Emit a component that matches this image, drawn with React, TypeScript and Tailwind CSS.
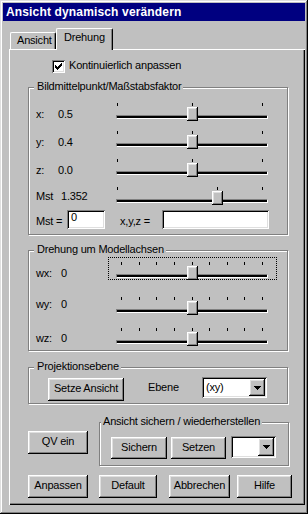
import type { ReactNode } from "react";

const raised =
  "shadow-[inset_-1px_-1px_0_#000,inset_1px_1px_0_#fff,inset_-2px_-2px_0_#808080,inset_2px_2px_0_#dfdfdf]";
const sunken =
  "shadow-[inset_1px_1px_0_#808080,inset_-1px_-1px_0_#fff,inset_2px_2px_0_#000,inset_-2px_-2px_0_#dfdfdf]";

type BoxProps = { className: string; children?: ReactNode };

const Button = ({ className, children }: BoxProps) => (
  <button
    type="button"
    className={`flex items-center justify-center bg-[#c0c0c0] pb-[2px] ${raised} ${className}`}
  >
    {children}
  </button>
);

const GroupBox = ({
  title,
  className,
  legendClass = "left-[5px] pl-[3px]",
  children,
}: BoxProps & { title: string; legendClass?: string }) => (
  <div
    className={`relative border border-[#808080] shadow-[1px_1px_0_#fff,inset_1px_1px_0_#fff] ${className}`}
  >
    <span className={`absolute top-[-8px] bg-[#c0c0c0] pr-[2px] ${legendClass}`}>{title}</span>
    {children}
  </div>
);

const Arrow = () => (
  <svg width="7" height="4" viewBox="0 0 7 4" shapeRendering="crispEdges">
    <path d="M0 0h7v1h-1v1h-1v1h-1v1h-1v-1h-1v-1h-1v-1h-1z" fill="#000" />
  </svg>
);

const Combo = ({ value, className }: { value: string; className: string }) => (
  <div className={`flex bg-white p-[2px] ${sunken} ${className}`}>
    <span className="flex flex-1 items-center pl-[2px]">{value}</span>
    <span className={`flex w-[16px] items-center justify-center bg-[#c0c0c0] ${raised}`}>
      <Arrow />
    </span>
  </div>
);

const Checkbox = () => (
  <div className={`h-[13px] w-[13px] shrink-0 bg-white ${sunken}`}>
    <svg width="13" height="13" viewBox="0 0 13 13" shapeRendering="crispEdges">
      <path
        d="M9 3h1v1h-1z M8 4h2v1h-2z M3 5h1v1h-1z M7 5h3v1h-3z M3 6h2v1h-2z M6 6h3v1h-3z M3 7h5v1h-5z M4 8h3v1h-3z M5 9h1v1h-1z"
        fill="#000"
      />
    </svg>
  </div>
);

type SliderProps = { thumb: number; ticks: number[]; focused?: boolean };

const Slider = ({ thumb, ticks, focused }: SliderProps) => (
  <div
    className={`relative h-[23px] w-[169px] shrink-0 border border-dotted ${
      focused ? "border-black" : "border-transparent"
    }`}
  >
    {ticks.map((t) => (
      <span key={t} className="absolute top-[4px] h-[3px] w-px bg-black" style={{ left: t }} />
    ))}
    <span className="absolute left-[7px] top-[16px] h-[4px] w-[152px] border border-[#808080] border-r-white border-b-white bg-black" />
    <span
      className={`absolute top-[8px] h-[14px] w-[11px] bg-[#c0c0c0] ${raised}`}
      style={{ left: thumb }}
    />
  </div>
);

type RowProps = SliderProps & {
  label: string;
  value: string;
  labelClass: string;
  textClass: string;
  rowClass: string;
};

const SliderRow = ({ label, value, labelClass, textClass, rowClass, ...slider }: RowProps) => (
  <div className={`flex items-start ${rowClass}`}>
    <div className={`flex w-[72px] ${textClass}`}>
      <span className={labelClass}>{label}</span>
      <span>{value}</span>
    </div>
    <Slider {...slider} />
  </div>
);

const centerTicks = [8, 83, 153];
const angleTicks = [12, 30, 47, 65, 83, 100, 118, 135, 153];

export default function App() {
  return (
    <div
      className={`flex h-[514px] w-[308px] flex-col bg-[#c0c0c0] p-[3px] font-['Liberation_Sans',Arial,sans-serif] text-[11px] leading-[13px] tracking-[-0.2px] text-black shadow-[inset_-1px_-1px_0_#000,inset_1px_1px_0_#dfdfdf,inset_-2px_-2px_0_#808080,inset_2px_2px_0_#fff]`}
    >
      <div className="h-[18px] bg-[#000080] pl-[3px] text-[12px] font-bold leading-[18px] tracking-[0.15px] text-white">
        Ansicht dynamisch verändern
      </div>

      <div className="flex flex-col pl-[6px]">
        <div className="flex h-[28px] items-end">
          <div className="ml-[1px] h-[17px] w-[46px] rounded-t-[2px] border-l border-t border-r border-white border-r-black pl-[6px] pt-[1px] shadow-[inset_-1px_0_0_#808080]">
            Ansicht
          </div>
          <div className="relative z-10 -mb-px h-[22px] w-[57px] rounded-t-[2px] border-l border-t border-r border-white border-r-black bg-[#c0c0c0] pl-[7px] pt-[2px] shadow-[inset_-1px_0_0_#808080]">
            Drehung
          </div>
        </div>

        <div className="flex h-[456px] flex-col border-l border-t border-white pl-[18px] pt-[10px] shadow-[inset_-1px_-1px_0_#000,inset_-2px_-2px_0_#808080]">
          <div className="ml-[24px] flex h-[13px] items-start">
            <Checkbox />
            <span className="-mt-px ml-[4px]">Kontinuierlich anpassen</span>
          </div>

          <GroupBox
            title="Bildmittelpunkt/Maßstabsfaktor"
            className="mt-[14px] w-[260px] pb-[5px] pl-[7px] pr-[10px] pt-[10px]"
          >
            <SliderRow label="x:" value="0.5" labelClass="w-[22px]" textClass="mt-[10px]" rowClass="h-[28px]" thumb={78} ticks={centerTicks} />
            <SliderRow label="y:" value="0.4" labelClass="w-[22px]" textClass="mt-[10px]" rowClass="h-[28px]" thumb={78} ticks={centerTicks} />
            <SliderRow label="z:" value="0.0" labelClass="w-[22px]" textClass="mt-[10px]" rowClass="h-[28px]" thumb={78} ticks={centerTicks} />
            <SliderRow label="Mst" value="1.352" labelClass="w-[25px]" textClass="mt-[8px]" rowClass="h-[28px]" thumb={103} ticks={[8, 108, 153]} />
            <div className="flex items-start">
              <span className="mt-[5px] w-[31px]">Mst =</span>
              <div className={`h-[19px] w-[38px] bg-white pl-[4px] pt-[1px] ${sunken}`}>0</div>
              <span className="ml-[15px] mt-[5px] w-[42px]">x,y,z =</span>
              <div className={`h-[19px] w-[107px] bg-white ${sunken}`} />
            </div>
          </GroupBox>

          <GroupBox
            title="Drehung um Modellachsen"
            className="mt-[15px] w-[260px] pb-[4px] pl-[7px] pr-[10px] pt-[6px]"
          >
            <SliderRow label="wx:" value="0" labelClass="w-[25px]" textClass="mt-[10px]" rowClass="h-[35px]" thumb={78} ticks={angleTicks} focused />
            <SliderRow label="wy:" value="0" labelClass="w-[25px]" textClass="mt-[6px]" rowClass="h-[31px]" thumb={78} ticks={angleTicks} />
            <SliderRow label="wz:" value="0" labelClass="w-[25px]" textClass="mt-[9px]" rowClass="h-[23px]" thumb={78} ticks={angleTicks} />
          </GroupBox>

          <GroupBox title="Projektionsebene" className="mt-[16px] w-[260px] pb-[2px] pl-[19px] pt-[9px]">
            <div className="flex items-start">
              <Button className="mt-[1px] h-[23px] w-[76px]">Setze Ansicht</Button>
              <span className="ml-[24px] mt-[4px] w-[54px]">Ebene</span>
              <Combo value="(xy)" className="h-[21px] w-[65px]" />
            </div>
          </GroupBox>

          <div className="mt-[18px] flex items-start">
            <Button className="mt-[9px] h-[23px] w-[60px]">QV ein</Button>
            <GroupBox
              title="Ansicht sichern / wiederherstellen"
              legendClass="left-[1px] pl-[2px]"
              className="ml-[11px] w-[190px] pb-[6px] pl-[11px] pt-[13px]"
            >
              <div className="flex items-start">
                <Button className="mt-[1px] h-[22px] w-[56px]">Sichern</Button>
                <Button className="ml-[4px] mt-[1px] h-[22px] w-[55px]">Setzen</Button>
                <Combo value="" className="ml-[5px] h-[22px] w-[45px]" />
              </div>
            </GroupBox>
          </div>

          <div className="mt-[9px] flex">
            <Button className="h-[23px] w-[60px]">Anpassen</Button>
            <Button className="ml-[11px] h-[23px] w-[58px]">Default</Button>
            <Button className="ml-[12px] h-[23px] w-[61px]">Abbrechen</Button>
            <Button className="ml-[7px] h-[23px] w-[55px]">Hilfe</Button>
          </div>
        </div>
      </div>
    </div>
  );
}
